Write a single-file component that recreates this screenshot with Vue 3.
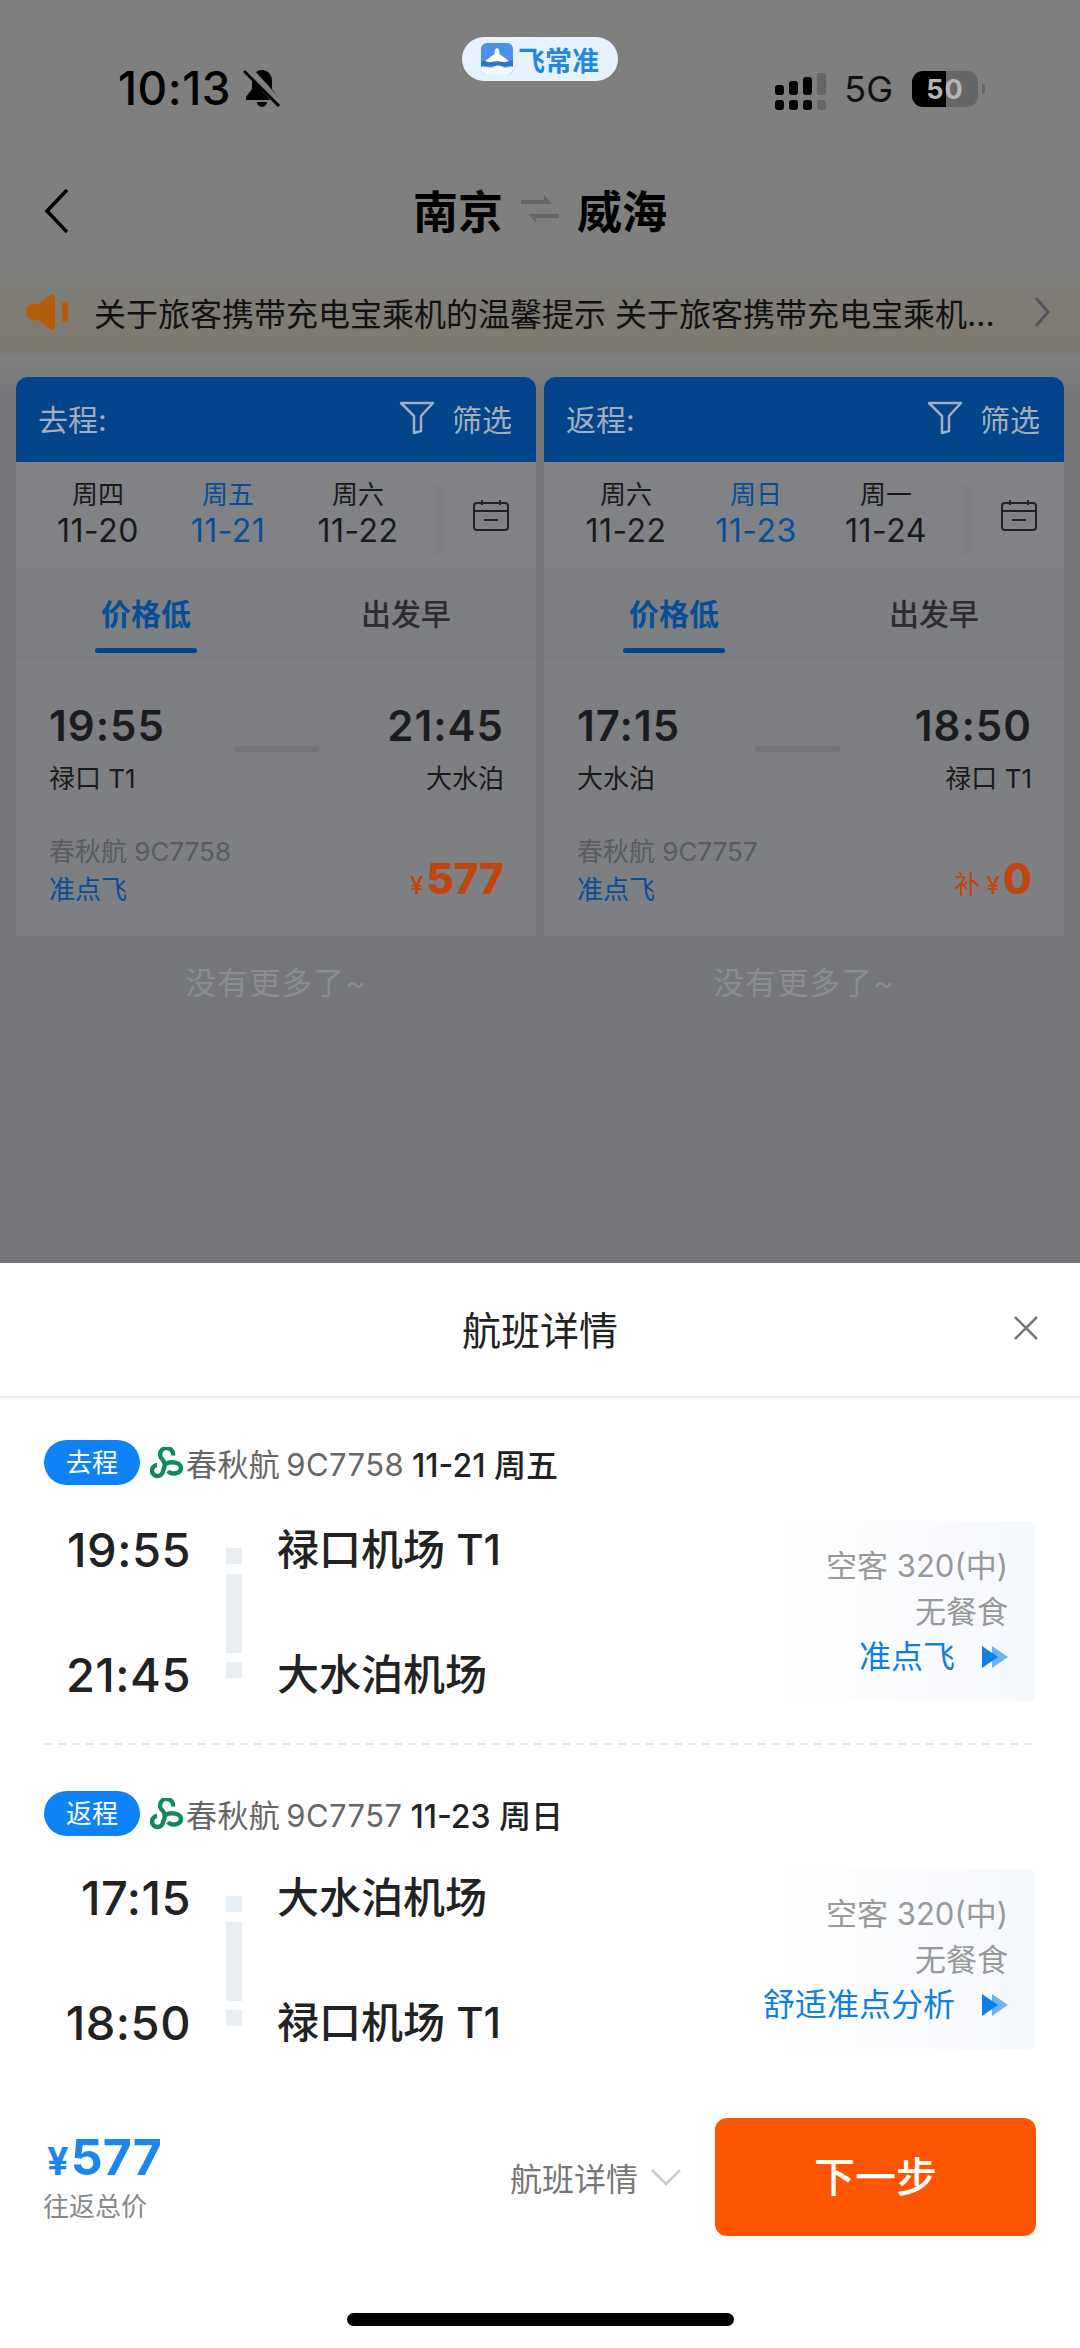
<script setup>
const cards = [
  {
    id: 'go',
    title: '去程:',
    dates: [
      { week: '周四', day: '11-20' },
      { week: '周五', day: '11-21', active: true },
      { week: '周六', day: '11-22' },
    ],
    depart: '19:55',
    arrive: '21:45',
    from: '禄口 T1',
    to: '大水泊',
    flight: '春秋航 9C7758',
    extra: '',
    price: '577',
  },
  {
    id: 'back',
    title: '返程:',
    dates: [
      { week: '周六', day: '11-22' },
      { week: '周日', day: '11-23', active: true },
      { week: '周一', day: '11-24' },
    ],
    depart: '17:15',
    arrive: '18:50',
    from: '大水泊',
    to: '禄口 T1',
    flight: '春秋航 9C7757',
    extra: '补',
    price: '0',
  },
]

const legs = [
  {
    tag: '去程',
    flight: '春秋航 9C7758',
    date: '11-21 周五',
    depart: '19:55',
    arrive: '21:45',
    from: '禄口机场 T1',
    to: '大水泊机场',
    link: '准点飞',
  },
  {
    tag: '返程',
    flight: '春秋航 9C7757',
    date: '11-23 周日',
    depart: '17:15',
    arrive: '18:50',
    from: '大水泊机场',
    to: '禄口机场 T1',
    link: '舒适准点分析',
  },
]
</script>

<template>
  <div class="app">
    <div class="page">
      <!-- Status bar -->
      <div class="status">
        <div class="status-left">
          <span class="clock">10:13</span>
          <svg class="bell" viewBox="0 0 38 38">
            <path d="M19 1c-6 0-10 5-10 11v8l-6 8v3h32v-3l-6-8v-8C29 6 25 1 19 1z" fill="#000" />
            <path d="M14 33h10a5 5 0 0 1-10 0z" fill="#000" />
            <path d="M5 0l32 36" stroke="#7f7f7f" stroke-width="8" />
            <path d="M1 2l35 35" stroke="#000" stroke-width="3" />
          </svg>
        </div>
        <div class="status-right">
          <div class="signal">
            <div v-for="(h, i) in [10, 14, 18, 22]" :key="i" class="signal-col" :class="{ off: i === 3 }">
              <i :style="{ height: h + 'px' }"></i>
              <i class="dot"></i>
            </div>
          </div>
          <span class="net">5G</span>
          <div class="battery"><span>50</span></div>
          <i class="battery-nub"></i>
        </div>
      </div>

      <div class="app-pill">
        <svg class="pill-logo" viewBox="0 0 32 32">
          <rect width="32" height="32" rx="6" fill="#4d90ea" />
          <path d="M16 5c1.500 0 2.500 3 2.500 6l9.500 7v2.500H4V18l9.500-7c0-3 1-6 2.500-6z" fill="#fff" />
          <path d="M0 18c3-2 6 2 10 1s8-1 12 0 7-3 10-1v5H0z" fill="#2f74d0" />
          <path d="M0 24c4-2 8 2 12 0s6-2 10 0 7-2 10 0v2a6 6 0 0 1-6 6H6a6 6 0 0 1-6-6z" fill="#f4f8fd" />
        </svg>
        <span>飞常准</span>
      </div>

      <!-- Nav -->
      <div class="nav">
        <svg class="back" viewBox="0 0 26 46">
          <path d="M23 2L3 23l20 21" fill="none" stroke="#000" stroke-width="3.5" />
        </svg>
        <div class="route">
          <span>南京</span>
          <svg class="swap" viewBox="0 0 38 36">
            <path d="M0 13h31L23 4v5H0zM38 23H7l8 9v-5h23z" fill="#666" />
          </svg>
          <span>威海</span>
        </div>
      </div>

      <!-- Notice -->
      <div class="notice">
        <svg class="speaker" viewBox="0 0 44 36">
          <path d="M0 18c0-5 3-8 8-8h4L24 1c2-1 4 0 5 2v30c-1 2-3 3-5 2L12 26H8c-5 0-8-3-8-8z" fill="#b35c0a" />
          <rect x="36" y="8" width="6" height="20" rx="3" fill="#b35c0a" />
        </svg>
        <span class="notice-text">关于旅客携带充电宝乘机的温馨提示 关于旅客携带充电宝乘机...</span>
        <svg class="notice-arrow" viewBox="0 0 16 30">
          <path d="M2 1l12 14L2 29" fill="none" stroke="#55565a" stroke-width="3" />
        </svg>
      </div>

      <!-- Flight columns -->
      <div class="columns">
        <div v-for="card in cards" :key="card.id" class="col">
          <div class="card">
            <div class="card-head">
              <span>{{ card.title }}</span>
              <div class="filter">
                <svg viewBox="0 0 36 34">
                  <path d="M2 2h32L22 15v15l-7 2V15z" fill="none" stroke="#a3aebb" stroke-width="2.5" stroke-linejoin="round" />
                </svg>
                <span>筛选</span>
              </div>
            </div>
            <div class="date-row">
              <div v-for="d in card.dates" :key="d.day" class="date" :class="{ active: d.active }">
                <div class="week">{{ d.week }}</div>
                <div class="day">{{ d.day }}</div>
              </div>
              <i class="date-split"></i>
              <svg class="calendar" viewBox="0 0 36 32">
                <rect x="1" y="4" width="34" height="27" rx="3" fill="none" stroke="#222" stroke-width="2" />
                <path d="M1 12h34M9 1v5M27 1v5M11 21h14" fill="none" stroke="#222" stroke-width="2" />
              </svg>
            </div>
            <div class="tabs">
              <div class="tab on">价格低<i></i></div>
              <div class="tab">出发早</div>
            </div>
            <div class="card-body">
              <div class="times">
                <div class="end">
                  <div class="time">{{ card.depart }}</div>
                  <div class="place">{{ card.from }}</div>
                </div>
                <i class="bar"></i>
                <div class="end right">
                  <div class="time">{{ card.arrive }}</div>
                  <div class="place">{{ card.to }}</div>
                </div>
              </div>
              <div class="card-foot">
                <div>
                  <div class="flight-no">{{ card.flight }}</div>
                  <div class="ontime">准点飞</div>
                </div>
                <div class="price">
                  <span v-if="card.extra" class="extra">{{ card.extra }}</span>
                  <span class="yen">¥</span>{{ card.price }}
                </div>
              </div>
            </div>
          </div>
          <div class="no-more">没有更多了~</div>
        </div>
      </div>
    </div>

    <!-- Bottom sheet -->
    <div class="sheet">
      <div class="sheet-head">
        <span></span>
        <span class="sheet-title">航班详情</span>
        <svg class="close" viewBox="0 0 24 24">
          <path d="M1 1l22 22M23 1L1 23" stroke="#777" stroke-width="2.6" />
        </svg>
      </div>

      <div class="legs">
        <template v-for="(leg, i) in legs" :key="leg.tag">
          <div v-if="i > 0" class="dash"></div>
          <div class="leg-title">
            <span class="tag">{{ leg.tag }}</span>
            <svg class="airline" viewBox="0 0 34 32">
              <g fill="none" stroke="#0f8a5a" stroke-width="4.4">
                <path d="M23 8.500A6.500 6.500 0 1 0 12.500 12.500C15 15 15.500 19 13 24A5.500 5.500 0 1 1 7 18" />
                <path d="M16 17C20 14 31 15 31 21C31 27 21 28 18 24" />
              </g>
            </svg>
            <span class="leg-flight">{{ leg.flight }}</span>
            <span class="leg-date">{{ leg.date }}</span>
          </div>
          <div class="leg-body">
            <div class="leg-times">
              <div>{{ leg.depart }}</div>
              <div>{{ leg.arrive }}</div>
            </div>
            <div class="line">
              <i class="short"></i>
              <i class="long"></i>
              <i class="short"></i>
            </div>
            <div class="leg-places">
              <div>{{ leg.from }}</div>
              <div>{{ leg.to }}</div>
            </div>
            <div class="leg-info">
              <div>空客 320(中)</div>
              <div>无餐食</div>
              <div class="leg-link">
                <span>{{ leg.link }}</span>
                <svg viewBox="0 0 26 24">
                  <path d="M10 1l16 11-16 11z" fill="#6fb1f3" />
                  <path d="M0 1l16 11L0 23z" fill="#0f7fe8" />
                </svg>
              </div>
            </div>
          </div>
        </template>
      </div>

      <div class="footer">
        <div class="total">
          <div class="total-price"><span>¥</span>577</div>
          <div class="total-label">往返总价</div>
        </div>
        <div class="toggle">
          <span>航班详情</span>
          <svg viewBox="0 0 32 18">
            <path d="M2 2l14 14L30 2" fill="none" stroke="#ccc" stroke-width="2.6" />
          </svg>
        </div>
        <div class="next">下一步</div>
      </div>

      <i class="home-bar"></i>
    </div>
  </div>
</template>

<style>
html,
body {
  margin: 0;
  background: #fff;
}
</style>

<style scoped>
.app {
  width: 1080px;
  height: 2348px;
  display: flex;
  flex-direction: column;
  overflow: hidden;
  font-family: Inter, "Noto Sans CJK SC", sans-serif;
  color: #1c1c1e;
}

i {
  display: block;
}

/* dimmed page behind the sheet */
.page {
  height: 1263px;
  flex: none;
  position: relative;
  background: linear-gradient(#7f7f7f 0, #7f7f7f 360px, #76787c 400px, #74767b 100%);
  box-sizing: border-box;
}

.status {
  height: 176px;
  display: flex;
  justify-content: space-between;
  align-items: center;
  padding: 0 95px 0 118px;
}

.status-left {
  display: flex;
  align-items: center;
  gap: 12px;
}

.clock {
  font-size: 46px;
  font-weight: 500;
  letter-spacing: 0.5px;
  color: #000;
}

.bell {
  width: 38px;
  height: 38px;
}

.status-right {
  display: flex;
  align-items: center;
  margin-top: 2px;
}

.signal {
  display: flex;
  gap: 5px;
  align-items: flex-end;
}

.signal-col i {
  width: 9px;
  border-radius: 3px;
  background: #000;
  margin-top: 5px;
}

.signal-col i.dot {
  height: 10px;
}

.signal-col.off i {
  background: #666;
}

.net {
  margin-left: 18px;
  font-size: 36px;
  color: #111;
}

.battery {
  margin-left: 19px;
  width: 66px;
  height: 36px;
  border-radius: 11px;
  background: linear-gradient(90deg, #000 51%, #666 51%);
  display: flex;
  align-items: center;
  justify-content: center;
}

.battery span {
  font-size: 27px;
  font-weight: 700;
  color: #b5b5b5;
  letter-spacing: 1px;
}

.battery-nub {
  margin-left: 4px;
  width: 3px;
  height: 10px;
  background: #666;
  border-radius: 0 3px 3px 0;
}

.app-pill {
  position: absolute;
  left: 462px;
  top: 37px;
  width: 156px;
  height: 44px;
  border-radius: 22px;
  background: #e6f2ff;
  display: flex;
  align-items: center;
  justify-content: center;
  gap: 5px;
  color: #1e88e5;
  font-size: 27px;
  font-weight: 700;
}

.pill-logo {
  width: 32px;
  height: 32px;
}

.nav {
  height: 66px;
  position: relative;
  display: flex;
  align-items: center;
  justify-content: center;
}

.back {
  position: absolute;
  left: 44px;
  top: 12px;
  width: 26px;
  height: 46px;
}

.route {
  display: flex;
  align-items: center;
  gap: 18px;
  font-size: 45px;
  font-weight: 600;
  color: #000;
}

.swap {
  width: 38px;
  height: 36px;
}

.notice {
  margin-top: 23px;
  height: 88px;
  box-sizing: border-box;
  padding: 6px 30px 0 26px;
  display: flex;
  align-items: center;
  background: linear-gradient(#7f7e7b, #7f7a70);
}

.speaker {
  width: 44px;
  height: 36px;
  flex: none;
}

.notice-text {
  margin-left: 24px;
  font-size: 32px;
  white-space: nowrap;
  color: #111;
}

.notice-arrow {
  margin-left: auto;
  width: 16px;
  height: 30px;
  flex: none;
}

.columns {
  margin-top: 24px;
  padding: 0 16px;
  display: flex;
  gap: 8px;
}

.col {
  width: 520px;
}

.card {
  border-radius: 12px 12px 0 0;
  overflow: hidden;
  background: #7d7f83;
}

.card-head {
  height: 85px;
  background: #03448b;
  display: flex;
  align-items: center;
  justify-content: space-between;
  padding: 0 24px 4px 22px;
  box-sizing: border-box;
  font-size: 30px;
  color: #a3aebb;
}

.filter {
  display: flex;
  align-items: center;
  gap: 17px;
}

.filter svg {
  width: 36px;
  height: 34px;
}

.date-row {
  height: 108px;
  box-sizing: border-box;
  border-bottom: 1px solid #787a7d;
  display: flex;
  padding: 15px 0 0 17px;
  position: relative;
  background: #808285;
}

.date {
  width: 130px;
  text-align: center;
  color: #1a1a1a;
}

.date.active {
  color: #064f98;
}

.week {
  font-size: 26px;
  line-height: 36px;
}

.day {
  font-size: 32px;
  line-height: 36px;
  letter-spacing: 0.5px;
}

.date-split {
  width: 8px;
  height: 70px;
  margin: 8px 0 0 12px;
  background: #7d7f82;
}

.calendar {
  width: 36px;
  height: 32px;
  margin: 22px 0 0 30px;
}

.tabs {
  height: 87px;
  box-sizing: border-box;
  border-bottom: 1px solid #787a7d;
  display: grid;
  grid-template-columns: 260px 260px;
  padding-top: 24px;
  background: #7d7f82;
  font-size: 30px;
  line-height: 40px;
  font-weight: 500;
  color: #2c2c2e;
  text-align: center;
}

.tab.on {
  color: #064f98;
  font-weight: 600;
}

.tab i {
  width: 102px;
  height: 5px;
  margin: 14px auto 0;
  border-radius: 3px;
  background: #03448b;
}

.card-body {
  height: 279px;
  box-sizing: border-box;
  padding: 44px 32px 0 33px;
}

.times {
  display: flex;
  justify-content: space-between;
  align-items: center;
}

.time {
  font-size: 42px;
  line-height: 50px;
  font-weight: 600;
  color: #1c1c1e;
  letter-spacing: 1px;
}

.place {
  margin-top: 10px;
  font-size: 26px;
  line-height: 36px;
  color: #1a1a1a;
}

.end.right {
  text-align: right;
}

.bar {
  width: 85px;
  height: 6px;
  border-radius: 3px;
  background: #727477;
}

.card-foot {
  margin-top: 36px;
  display: flex;
  justify-content: space-between;
  align-items: flex-end;
}

.flight-no,
.ontime {
  font-size: 26px;
  line-height: 38px;
  color: #5a5c60;
}

.ontime {
  color: #064f98;
}

.price {
  font-size: 42px;
  line-height: 48px;
  font-weight: 800;
  color: #c2450e;
  margin-bottom: -1px;
}

.yen {
  font-size: 24px;
  font-weight: 500;
  margin-right: 3px;
}

.extra {
  font-size: 26px;
  font-weight: 400;
  margin-right: 6px;
}

.no-more {
  margin-top: 27px;
  text-align: center;
  font-size: 31px;
  line-height: 40px;
  letter-spacing: 1px;
  color: #8b8d91;
}

/* sheet */
.sheet {
  flex: 1;
  display: flex;
  flex-direction: column;
  background: #fff;
}

.sheet-head {
  height: 135px;
  flex: none;
  box-sizing: border-box;
  border-bottom: 2px solid #eeeeee;
  display: grid;
  grid-template-columns: 1fr auto 1fr;
  align-items: center;
  padding: 0 42px 3px;
}

.sheet-title {
  font-size: 39px;
  color: #222;
}

.close {
  justify-self: end;
  width: 24px;
  height: 24px;
}

.legs {
  padding: 42px 45px 0 44px;
}

.leg-title {
  display: flex;
  align-items: center;
  height: 45px;
}

.tag {
  width: 96px;
  height: 45px;
  border-radius: 23px;
  background: #0f82f5;
  color: #fff;
  font-size: 26px;
  line-height: 45px;
  text-align: center;
}

.airline {
  width: 34px;
  height: 32px;
  flex: none;
  margin: 0 2px 0 10px;
}

.leg-flight {
  font-size: 31px;
  letter-spacing: 0.4px;
  word-spacing: -3px;
  color: #666;
}

.leg-date {
  margin-left: 8px;
  font-size: 32px;
  font-weight: 500;
  color: #222;
}

.leg-body {
  margin-top: 36px;
  height: 180px;
  display: flex;
}

.dash ~ .leg-body {
  margin-top: 33px;
}

.leg-times {
  width: 147px;
  padding-top: 4px;
  text-align: right;
  font-size: 47px;
  line-height: 50px;
  font-weight: 500;
  letter-spacing: 0.5px;
  color: #222;
}

.leg-times div + div,
.leg-places div + div {
  margin-top: 75px;
}

.line {
  width: 16px;
  flex: none;
  margin-left: 35px;
  padding-top: 27px;
}

.line i {
  background: #e9eef3;
}

.line .short {
  height: 16px;
}

.line .long {
  height: 79px;
  margin: 10px 0 9px;
}

.leg-places {
  margin-left: 35px;
  padding-top: 4px;
  flex: 1;
  font-size: 42px;
  line-height: 50px;
  font-weight: 500;
  color: #222;
}

.leg-info {
  width: 280px;
  flex: none;
  box-sizing: border-box;
  padding: 22px 27px 0 0;
  text-align: right;
  font-size: 31px;
  line-height: 45.5px;
  color: #999;
  background: linear-gradient(90deg, #fff 10%, #f5f8fd);
  border-radius: 6px;
}

.leg-link {
  display: flex;
  justify-content: flex-end;
  align-items: center;
  gap: 27px;
  font-size: 32px;
  color: #0f7fe0;
  white-space: nowrap;
}

.leg-link svg {
  width: 26px;
  height: 24px;
  flex: none;
}

.dash {
  margin-top: 42px;
  margin-bottom: 46px;
  height: 2px;
  background: repeating-linear-gradient(90deg, #e8e8e8 0 8px, transparent 8px 14px);
}

.footer {
  margin-top: 69px;
  padding: 0 44px 0 43px;
  display: flex;
  align-items: center;
}

.total {
  margin-top: 2px;
}

.total-price {
  font-size: 50px;
  line-height: 50px;
  font-weight: 700;
  color: #1b87ee;
}

.total-price span {
  font-size: 38px;
  margin: 0 2px 0 4px;
}

.total-label {
  margin-top: 3px;
  font-size: 26px;
  line-height: 36px;
  color: #888;
}

.toggle {
  margin-left: auto;
  display: flex;
  align-items: center;
  gap: 12px;
  font-size: 32px;
  color: #777;
}

.toggle svg {
  width: 32px;
  height: 18px;
}

.next {
  margin-left: 33px;
  width: 321px;
  height: 118px;
  border-radius: 12px;
  background: #ff5500;
  color: #fff;
  font-size: 41px;
  font-weight: 500;
  text-align: center;
  line-height: 118px;
}

.home-bar {
  margin: auto auto 22px;
  width: 387px;
  height: 13px;
  border-radius: 7px;
  background: #000;
}
</style>
